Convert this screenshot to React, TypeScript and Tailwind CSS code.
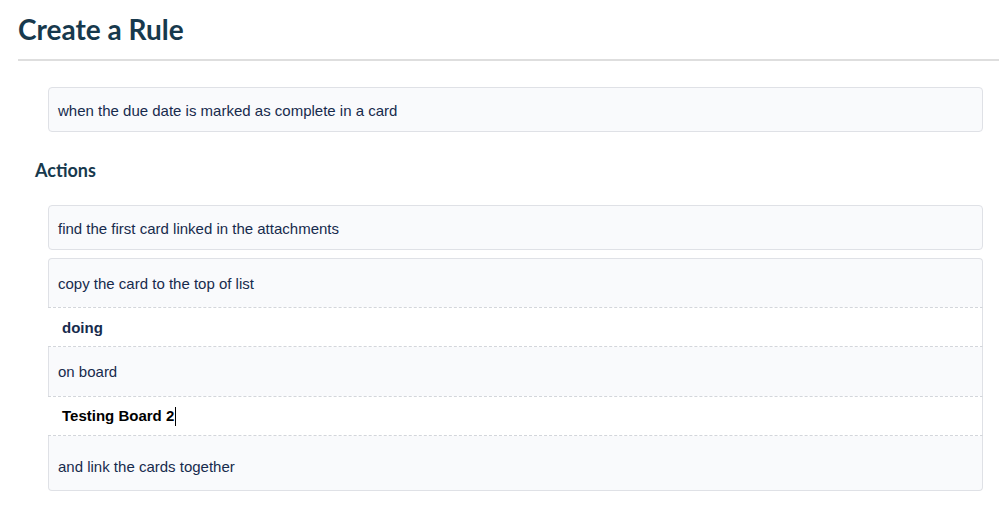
const body = "font-['Liberation_Sans',Helvetica,Arial,sans-serif]";
const lato = "font-['Lato','Noto_Sans',sans-serif]";

function Box({ children }: { children: React.ReactNode }) {
  return (
    <div className="flex h-[45px] items-center rounded border border-[#dfe1e6] bg-[#f9fafc] pl-[9px] pt-[3px] text-[15px] text-[#172b4d]">
      {children}
    </div>
  );
}

export default function App() {
  return (
    <div className={`min-h-[510px] bg-white pl-[18px] ${body}`}>
      <h1 className={`${lato} pt-[12px] text-[28px] font-bold leading-[34px] text-[#17394d]`}>
        Create a Rule
      </h1>
      <div className="mt-[13px] h-[2px] bg-[#dedede]" />

      <div className="pr-[16px]">
        <div className="ml-[30px] mt-[26px]">
          <Box>when the due date is marked as complete in a card</Box>
        </div>

        <h2 className={`${lato} ml-[17px] mt-[27px] text-[18px] font-bold leading-[22px] text-[#17394d]`}>
          Actions
        </h2>

        <div className="ml-[30px] mt-[24px]">
          <Box>find the first card linked in the attachments</Box>
        </div>

        {/* multi-part action with inline inputs */}
        <div className="ml-[30px] mt-[8px] flex flex-col text-[15px] text-[#172b4d]">
          <div className="flex h-[49px] items-center rounded-t border-x border-t border-[#dfe1e6] bg-[#f9fafc] pl-[9px] pt-[2px]">
            copy the card to the top of list
          </div>
          <div className="flex h-[40px] items-center border-y border-r border-y-[#d3d6db] border-r-[#dfe1e6] bg-white pl-[14px] pt-[2px] font-bold [border-bottom-style:dashed] [border-top-style:dashed]">
            doing
          </div>
          <div className="flex h-[49px] items-center border-x border-[#dfe1e6] bg-[#f9fafc] pl-[9px] pt-[2px]">
            on board
          </div>
          <div className="flex h-[40px] items-center border-y border-r border-y-[#d3d6db] border-r-[#dfe1e6] bg-white pl-[14px] pt-px font-bold text-black [border-bottom-style:dashed] [border-top-style:dashed]">
            Testing Board 2
            <span className="ml-px inline-block h-[19px] w-px bg-black" />
          </div>
          <div className="flex h-[55px] items-center rounded-b border-x border-b border-[#dfe1e6] bg-[#f9fafc] pl-[9px] pt-[9px]">
            and link the cards together
          </div>
        </div>
      </div>
    </div>
  );
}
